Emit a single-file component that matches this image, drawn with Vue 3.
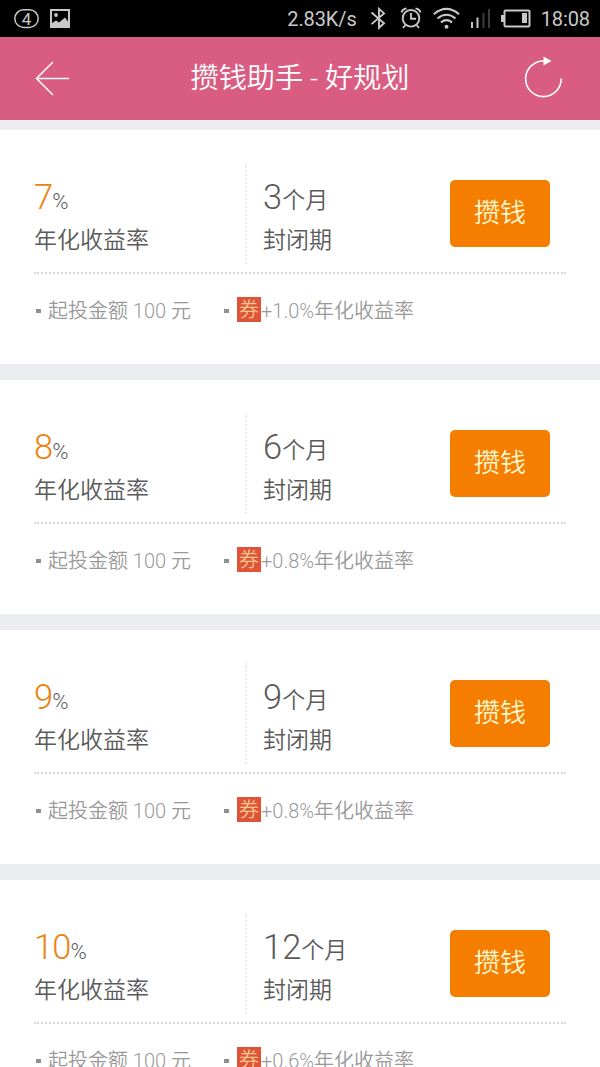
<script setup>
const plans = [
  { rate: '7', months: '3', bonus: '+1.0%' },
  { rate: '8', months: '6', bonus: '+0.8%' },
  { rate: '9', months: '9', bonus: '+0.8%' },
  { rate: '10', months: '12', bonus: '+0.6%' },
]
</script>

<template>
  <div class="screen">
    <div class="status">
      <svg class="notices" width="60" height="36" viewBox="0 0 60 36">
        <rect x="4.8" y="9.8" width="23.4" height="17.6" rx="8.8" fill="none" stroke="#c8c8c8" stroke-width="1.5" />
        <text x="16.5" y="24.5" text-anchor="middle" class="count">4</text>
        <path fill="#c8c8c8" fill-rule="evenodd" d="M40 9h20v19H40zM42 11v12l4-2.500 3 2 6-5 3 4V11z" />
        <circle cx="46" cy="15" r="1.9" fill="#c8c8c8" />
      </svg>
      <div class="system">
        <span class="speed">2.83K/s</span>
        <svg class="glyphs" width="164" height="36" viewBox="370 0 164 36" fill="none" stroke="#c8c8c8">
          <path stroke-width="1.9" d="M371.500 12.500l12.500 10.700-5 4.600V8.800l5 4.600-12.500 10.700" />
          <g stroke-width="1.9">
            <circle cx="411" cy="18.3" r="8.3" />
            <path d="M411 13v5.8h5M405.5 25l-2.5 3M416.5 25l2.5 3M401.5 12.5q1-3.5 5-4M420.500 12.500q-1-3.500-5-4" />
          </g>
          <g stroke-width="2.1">
            <path d="M433.800 14.200q12.600-10.500 25.200 0" />
            <path d="M437.500 18.500q9-7.500 18 0" />
            <path d="M441 22.300q5.500-4.300 11 0" />
          </g>
          <circle cx="446.500" cy="26.800" r="2" fill="#c8c8c8" stroke="none" />
          <path stroke-width="2" d="M472 22v6M477.500 17.500V28" />
          <path stroke="#3c3c3c" stroke-width="2" d="M483.500 13v15M489 9v19" />
          <rect x="504.500" y="10.500" width="25" height="16" rx="1" stroke-width="2" />
          <path fill="#c8c8c8" stroke="none" d="M501 15h3v7h-3zM522 13h5v10h-5z" />
        </svg>
        <span class="clock">18:08</span>
      </div>
    </div>

    <header class="header">
      <svg width="36" height="36" viewBox="0 0 36 36" fill="none" stroke="#fff" stroke-width="1.500" stroke-linecap="round">
        <path d="M33.500 17.500H1.500M17.500 1.500L1.500 17.500l16 16" />
      </svg>
      <h1>攒钱助手 - 好规划</h1>
      <svg width="40" height="44" viewBox="0 0 40 44">
        <path d="M38.200 21.500A17.800 17.800 0 1 1 21 4" fill="none" stroke="#fff" stroke-width="1.600" />
        <path d="M20.500-.5l8 4.500-8 4.500z" fill="#fff" />
      </svg>
    </header>

    <main class="list">
      <section v-for="plan in plans" :key="plan.rate" class="card">
        <div class="top">
          <div class="metric rate">
            <div class="value"><b>{{ plan.rate }}</b><span>%</span></div>
            <div class="label">年化收益率</div>
          </div>
          <div class="metric term">
            <div class="value"><b>{{ plan.months }}</b><span class="unit">个月</span></div>
            <div class="label">封闭期</div>
          </div>
          <button class="save">攒钱</button>
        </div>
        <div class="notes">
          <div class="note minimum"><i></i>起投金额 100 元</div>
          <div class="note"><i></i><span class="coupon">券</span>{{ plan.bonus }}年化收益率</div>
        </div>
      </section>
    </main>
  </div>
</template>

<style>
body {
  margin: 0;
  overflow: hidden;
}
</style>

<style scoped>
.screen {
  width: 600px;
  height: 1067px;
  overflow: hidden;
  background: #ecedf1;
  color: #5a5a5a;
  font-family: "Roboto Light", Roboto, "Noto Sans CJK SC DemiLight", "Noto Sans CJK SC", sans-serif;
  font-weight: 350;
}
.status {
  height: 37px;
  box-sizing: border-box;
  padding: 0 10px;
  display: flex;
  justify-content: space-between;
  background: #000;
  color: #c8c8c8;
  font-family: Roboto, sans-serif;
  font-weight: 400;
}
.status svg {
  display: block;
}
.count {
  font-size: 17px;
  font-weight: 400;
  fill: #c8c8c8;
}
.system {
  display: flex;
  line-height: 38px;
  font-size: 20px;
}
.speed {
  margin-right: 13px;
  letter-spacing: -0.1px;
}
.clock {
  margin-left: 7px;
  letter-spacing: -0.1px;
}
.header {
  height: 83px;
  box-sizing: border-box;
  padding: 0 37px 0 35px;
  display: flex;
  align-items: center;
  justify-content: space-between;
  background: #d95d82;
}
.header svg {
  overflow: visible;
}
.header h1 {
  margin: 1px 0 0 6px;
  color: #fff;
  font-size: 28.2px;
  line-height: 40px;
  font-weight: 350;
}
.list {
  padding-top: 10px;
  display: flex;
  flex-direction: column;
  gap: 16px;
}
.card {
  height: 234px;
  box-sizing: border-box;
  padding: 33px 34px 0;
  background: #fff;
}
.top {
  height: 111px;
  box-sizing: border-box;
  display: flex;
  align-items: flex-start;
  border-bottom: 2px dotted #d8d8d8;
}
.metric {
  height: 101px;
  box-sizing: border-box;
  padding-top: 14px;
}
.rate {
  width: 213px;
  border-right: 2px dotted #ebebeb;
}
.term {
  width: 186px;
  padding-left: 16px;
}
.value {
  height: 40px;
  display: flex;
  align-items: baseline;
  line-height: 40px;
}
.value b {
  font-size: 34.5px;
  font-weight: 300;
}
.value span {
  font-size: 23px;
}
.rate .value span {
  font-size: 22px;
}
.value .unit {
  transform: translateY(-1px);
}
.rate b {
  color: #ec8210;
  letter-spacing: -0.9px;
}
.label {
  margin-top: 9px;
  font-size: 23px;
  line-height: 30px;
}
.save {
  width: 100px;
  height: 67px;
  margin: 17px 0 0 17px;
  flex: none;
  padding: 0 0 6px;
  border: 0;
  border-radius: 5px;
  background: #f57e00;
  color: #fff8d0;
  font: inherit;
  font-size: 26px;
}
.notes {
  margin-top: 22px;
  display: flex;
  font-size: 20px;
  line-height: 30px;
  color: #999;
}
.note {
  display: flex;
  align-items: center;
  white-space: pre;
}
.minimum {
  width: 188px;
}
.note i {
  width: 5px;
  height: 4px;
  margin: 0 8px 0 2px;
  background: #909090;
}
.minimum i {
  margin-right: 7px;
}
.coupon {
  width: 24px;
  height: 25px;
  margin: -4px 0 0;
  background: #df5338;
  color: #f7c58e;
  font-size: 20px;
  line-height: 26px;
  font-weight: 400;
  text-align: center;
}
</style>
